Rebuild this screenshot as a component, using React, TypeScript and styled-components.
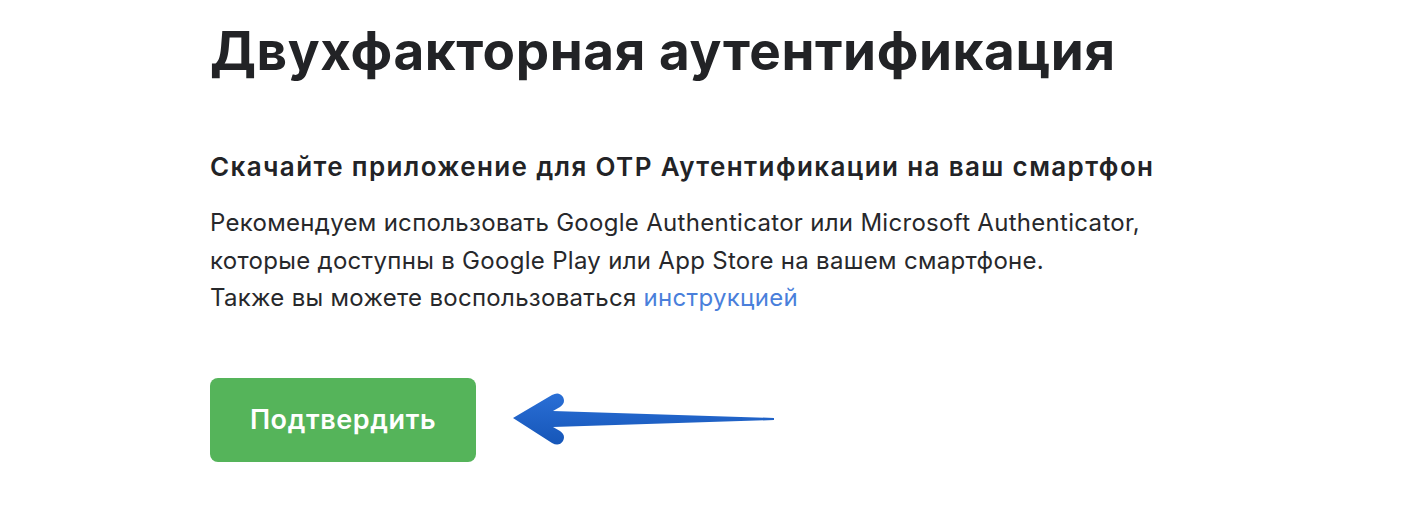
import styled, { createGlobalStyle } from "styled-components";

const GlobalStyle = createGlobalStyle`
  body {
    margin: 0;
    background: #ffffff;
    font-family: Inter, "Noto Sans", sans-serif;
    color: #222326;
  }
`;

const Page = styled.main`
  padding: 11px 210px 0;
`;

const Title = styled.h1`
  margin: 0;
  font-size: 53px;
  font-weight: 700;
  line-height: 80px;
  letter-spacing: 0.6px;
`;

const Subtitle = styled.h2`
  margin: 59px 0 0;
  font-size: 26px;
  font-weight: 600;
  line-height: 34px;
  letter-spacing: 1.38px;
`;

const Text = styled.p`
  margin: 20px 0 0;
  font-size: 24px;
  font-weight: 400;
  line-height: 37.5px;
  letter-spacing: 0.3px;
  color: #27282b;
`;

const Link = styled.a`
  color: #4a7fdb;
  text-decoration: none;
`;

const Actions = styled.div`
  display: flex;
  align-items: center;
  gap: 30px;
  margin-top: 61px;
`;

const ConfirmButton = styled.button`
  width: 266px;
  height: 84px;
  padding: 0;
  border: none;
  border-radius: 8px;
  background: #55b45a;
  color: #ffffff;
  font-family: Inter, "Noto Sans", sans-serif;
  font-size: 27px;
  font-weight: 600;
  letter-spacing: 0.6px;
  cursor: pointer;
`;

const Arrow = () => (
  <svg width="270" height="60" viewBox="0 0 270 60">
    <defs>
      <linearGradient id="arrowFill" x1="0" y1="0" x2="0" y2="1">
        <stop offset="0" stopColor="#2a6fd6" />
        <stop offset="1" stopColor="#1656b8" />
      </linearGradient>
    </defs>
    <path
      d="M7,28 L46,5 Q53,1 57,7 Q60,13 54,17 L47,21 L268,28 L268,30 L47,37 L54,41 Q60,45 57,51 Q53,57 46,53 Z"
      fill="url(#arrowFill)"
    />
  </svg>
);

export default function App() {
  return (
    <>
      <GlobalStyle />
      <Page>
        <Title>Двухфакторная аутентификация</Title>
        <Subtitle>Скачайте приложение для OTP Аутентификации на ваш смартфон</Subtitle>
        <Text>
          Рекомендуем использовать Google Authenticator или Microsoft Authenticator,
          <br />
          которые доступны в Google Play или App Store на вашем смартфоне.
          <br />
          Также вы можете воспользоваться <Link href="#">инструкцией</Link>
        </Text>
        <Actions>
          <ConfirmButton>Подтвердить</ConfirmButton>
          <Arrow />
        </Actions>
      </Page>
    </>
  );
}
